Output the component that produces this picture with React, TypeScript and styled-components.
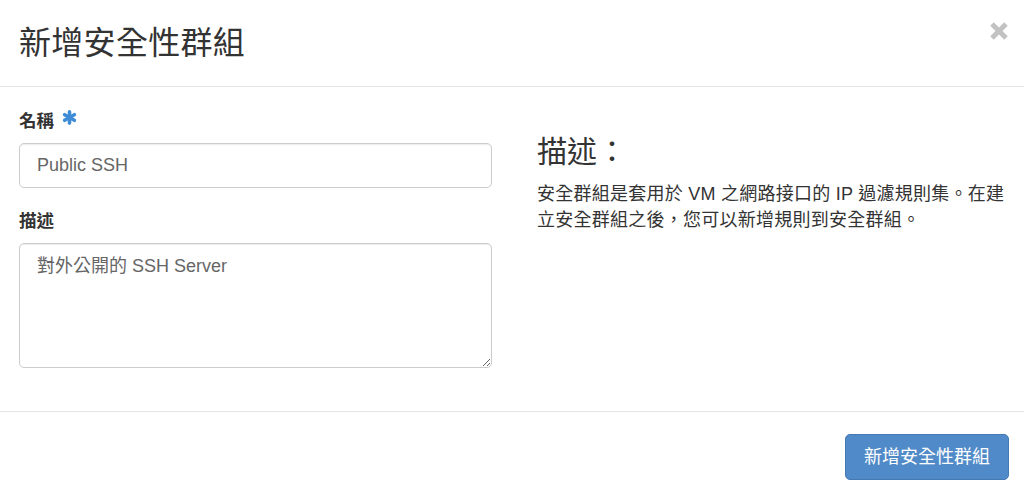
import React from "react";
import styled, { createGlobalStyle } from "styled-components";

const GlobalStyle = createGlobalStyle`
  html, body {
    margin: 0;
    padding: 0;
    background: #ffffff;
  }
  body {
    font-family: "Liberation Sans", "Noto Sans CJK TC", sans-serif;
    color: #333333;
  }
  * { box-sizing: border-box; }
`;

const Modal = styled.div`
  width: 1024px;
  height: 493px;
  display: flex;
  flex-direction: column;
  background: #fff;
`;

const Header = styled.header`
  height: 87px;
  flex: none;
  display: flex;
  align-items: flex-start;
  justify-content: space-between;
  padding: 0 16px 0 19px;
  border-bottom: 1px solid #e5e5e5;
`;

const Title = styled.h4`
  margin: 0;
  margin-top: 20px;
  font-size: 32px;
  line-height: 46px;
  font-weight: 400;
  letter-spacing: 0.3px;
  color: #333;
  font-family: "Liberation Sans", "Noto Sans CJK TC", sans-serif;
`;

const CloseButton = styled.button`
  margin-top: 22px;
  padding: 0;
  border: 0;
  background: transparent;
  width: 18px;
  height: 18px;
  cursor: pointer;
  display: flex;
`;

const Body = styled.div`
  height: 324px;
  flex: none;
  display: grid;
  grid-template-columns: 473px 1fr;
  column-gap: 45px;
  padding: 22px 12px 0 19px;
`;

const FormColumn = styled.div`
  display: flex;
  flex-direction: column;
`;

const Label = styled.label<{ $gap?: number }>`
  display: flex;
  align-items: center;
  gap: 8px;
  font-size: 17.5px;
  line-height: 24px;
  font-weight: 700;
  color: #333;
  margin-top: ${(p) => p.$gap ?? 0}px;
  margin-bottom: 10px;
`;

const TextInput = styled.input`
  width: 100%;
  height: 45px;
  border: 1px solid #cccccc;
  border-radius: 5px;
  padding: 0 17px;
  font-family: "Liberation Sans", "Noto Sans CJK TC", sans-serif;
  font-size: 18px;
  color: #666;
  box-shadow: inset 0 1px 1px rgba(0, 0, 0, 0.075);
  outline: none;
`;

const TextArea = styled.textarea`
  width: 100%;
  height: 125px;
  border: 1px solid #cccccc;
  border-radius: 5px;
  padding: 9px 17px;
  font-family: "Liberation Sans", "Noto Sans CJK TC", sans-serif;
  font-size: 18px;
  line-height: 26px;
  color: #666;
  box-shadow: inset 0 1px 1px rgba(0, 0, 0, 0.075);
  outline: none;
  resize: vertical;
`;

const HelpColumn = styled.div`
  display: flex;
  flex-direction: column;
`;

const HelpHeading = styled.h3`
  margin: 23px 0 0 0;
  font-size: 30px;
  line-height: 40px;
  font-weight: 400;
  color: #333;
`;

const HelpText = styled.p`
  margin: 9px 0 0 0;
  font-size: 18px;
  line-height: 26px;
  letter-spacing: 0.25px;
  color: #333;
`;

const Footer = styled.footer`
  flex: none;
  border-top: 1px solid #e5e5e5;
  display: flex;
  justify-content: flex-end;
  padding: 22px 15px 0 15px;
`;

const PrimaryButton = styled.button`
  height: 46px;
  padding: 0 18px;
  border: 1px solid #4479b3;
  border-radius: 5px;
  background: #508ac8;
  color: #ffffff;
  font-family: "Liberation Sans", "Noto Sans CJK TC", sans-serif;
  font-size: 18px;
  line-height: 26px;
  cursor: pointer;
`;

const Asterisk = () => (
  <svg width="15" height="15" viewBox="0 0 15 15" style={{ marginTop: -7 }}>
    <g stroke="#3f8cd6" strokeWidth="3.6" strokeLinecap="round">
      <line x1="7.5" y1="1.9" x2="7.5" y2="13.1" />
      <line x1="2.65" y1="4.7" x2="12.35" y2="10.3" />
      <line x1="12.35" y1="4.7" x2="2.65" y2="10.3" />
    </g>
  </svg>
);

const CloseIcon = () => (
  <svg width="18" height="18" viewBox="0 0 18 18">
    <g stroke="#c2c2c2" strokeWidth="5" strokeLinecap="butt">
      <line x1="2" y1="2" x2="16" y2="16" />
      <line x1="16" y1="2" x2="2" y2="16" />
    </g>
  </svg>
);

export default function App() {
  return (
    <>
      <GlobalStyle />
      <Modal>
        <Header>
          <Title>新增安全性群組</Title>
          <CloseButton aria-label="Close">
            <CloseIcon />
          </CloseButton>
        </Header>
        <Body>
          <FormColumn>
            <Label>
              名稱
              <Asterisk />
            </Label>
            <TextInput defaultValue="Public SSH" />
            <Label $gap={21}>描述</Label>
            <TextArea defaultValue="對外公開的 SSH Server" />
          </FormColumn>
          <HelpColumn>
            <HelpHeading>描述：</HelpHeading>
            <HelpText>
              安全群組是套用於 VM 之網路接口的 IP 過濾規則集。在建立安全群組之後，您可以新增規則到安全群組。
            </HelpText>
          </HelpColumn>
        </Body>
        <Footer>
          <PrimaryButton>新增安全性群組</PrimaryButton>
        </Footer>
      </Modal>
    </>
  );
}
